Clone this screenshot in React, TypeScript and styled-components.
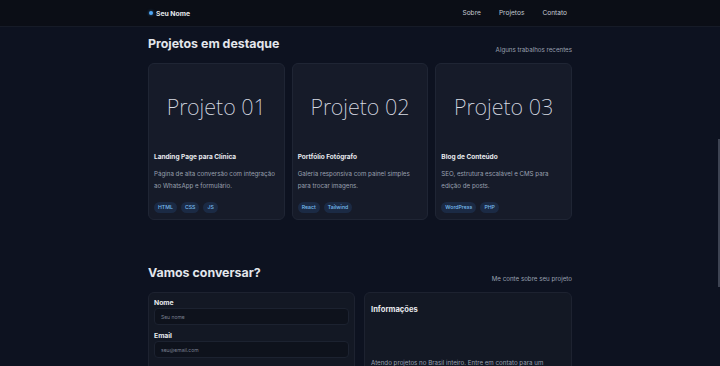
import React from "react";
import styled, { createGlobalStyle } from "styled-components";

const Global = createGlobalStyle`
  html, body { margin: 0; padding: 0; background: #0d1220; }
  body { font-family: Inter, "Noto Sans", sans-serif; color: #e5e7eb; overflow: hidden; }
  * { box-sizing: border-box; }
`;

const Page = styled.div`
  width: 720px;
  height: 366px;
  overflow: hidden;
  background: #0d1220;
  position: relative;
`;

const Header = styled.header`
  height: 27px;
  background: #0b0e16;
  border-bottom: 1px solid #161b27;
  display: flex;
  justify-content: center;
`;

const Container = styled.div`
  width: 424px;
  margin: 0 auto;
`;

const HeaderInner = styled(Container)`
  display: flex;
  align-items: center;
  justify-content: space-between;
  padding-right: 5px;
`;

const Brand = styled.div`
  display: flex;
  align-items: center;
  gap: 3px;
  font-size: 6.8px;
  font-weight: 700;
  color: #e5e7eb;
  padding-left: 1px;
`;

const Dot = styled.span`
  width: 4px;
  height: 4px;
  border-radius: 50%;
  background: #4ea6f5;
  box-shadow: 0 0 3px rgba(78, 166, 245, 0.6);
`;

const Nav = styled.nav`
  display: flex;
  gap: 18px;
  font-size: 6.6px;
  color: #c3c8d2;
`;

const Section = styled(Container)<{ $top: number }>`
  padding-top: ${(p) => p.$top}px;
`;

const HeadRow = styled.div`
  display: flex;
  justify-content: space-between;
  align-items: flex-end;
  margin-bottom: 10px;
`;

const Title = styled.h2`
  margin: 0;
  font-size: 12.4px;
  line-height: 18px;
  font-weight: 700;
  color: #e3e6ec;
`;

const Sub = styled.span`
  font-size: 6.2px;
  color: #9aa1b0;
  padding-bottom: 0;
`;

const Cards = styled.div`
  display: grid;
  grid-template-columns: repeat(3, 1fr);
  gap: 7px;
`;

const Card = styled.div`
  background: #161b29;
  border: 1px solid #1f2534;
  border-radius: 6px;
  height: 157px;
  display: flex;
  flex-direction: column;
`;

const Thumb = styled.div`
  height: 84px;
  display: flex;
  align-items: center;
  justify-content: center;
  font-family: "Noto Sans", sans-serif;
  font-weight: 200;
  font-size: 21.6px;
  color: #d8dce3;
`;

const Body = styled.div`
  padding: 3px 5px 0 5px;
  display: flex;
  flex-direction: column;
`;

const CardTitle = styled.div`
  font-size: 6.5px;
  font-weight: 700;
  color: #e8eaee;
  line-height: 12px;
`;

const Desc = styled.div`
  margin-top: 5px;
  font-size: 6.2px;
  line-height: 12px;
  color: #9aa1b0;
`;

const Tags = styled.div`
  display: flex;
  gap: 4px;
  margin-top: 10px;
`;

const Tag = styled.span`
  background: #1b2a44;
  color: #79bdf0;
  font-size: 5.2px;
  font-weight: 500;
  padding: 0 4px;
  height: 11px;
  line-height: 11px;
  border-radius: 6px;
`;

const Grid2 = styled.div`
  display: grid;
  grid-template-columns: 207px 208px;
  gap: 9px;
`;

const Panel = styled.div`
  background: #131824;
  border: 1px solid #1d2230;
  border-radius: 6px;
  height: 120px;
  padding: 5px 5px;
`;

const Label = styled.div`
  font-size: 6.8px;
  font-weight: 700;
  color: #e8eaee;
  line-height: 10px;
`;

const Input = styled.div`
  margin-bottom: 6px;
  height: 17px;
  background: #0e121c;
  border: 1px solid #1c2230;
  border-radius: 4px;
  font-size: 5px;
  color: #7a8090;
  display: flex;
  align-items: center;
  padding-left: 6px;
`;

const InfoTitle = styled.div`
  font-size: 7.6px;
  font-weight: 700;
  color: #e8eaee;
  margin-top: 7px;
  margin-left: 1px;
`;

const InfoText = styled.div`
  margin-top: 45px;
  font-size: 6.2px;
  color: #9aa1b0;
  margin-left: 1px;
`;

const Scroll = styled.div`
  position: absolute;
  right: 0;
  top: 139px;
  width: 2px;
  height: 148px;
  background: #3d4352;
`;

const projects = [
  {
    n: "01",
    title: "Landing Page para Clínica",
    desc: "Página de alta conversão com integração ao WhatsApp e formulário.",
    tags: ["HTML", "CSS", "JS"],
  },
  {
    n: "02",
    title: "Portfólio Fotógrafo",
    desc: "Galeria responsiva com painel simples para trocar imagens.",
    tags: ["React", "Tailwind"],
  },
  {
    n: "03",
    title: "Blog de Conteúdo",
    desc: "SEO, estrutura escalável e CMS para edição de posts.",
    tags: ["WordPress", "PHP"],
  },
];

export default function App() {
  return (
    <Page>
      <Global />
      <Header>
        <HeaderInner>
          <Brand>
            <Dot />
            Seu Nome
          </Brand>
          <Nav>
            <span>Sobre</span>
            <span>Projetos</span>
            <span>Contato</span>
          </Nav>
        </HeaderInner>
      </Header>
      <Section $top={8}>
        <HeadRow>
          <Title>Projetos em destaque</Title>
          <Sub>Alguns trabalhos recentes</Sub>
        </HeadRow>
        <Cards>
          {projects.map((p) => (
            <Card key={p.n}>
              <Thumb>Projeto {p.n}</Thumb>
              <Body>
                <CardTitle>{p.title}</CardTitle>
                <Desc>{p.desc}</Desc>
                <Tags>
                  {p.tags.map((t) => (
                    <Tag key={t}>{t}</Tag>
                  ))}
                </Tags>
              </Body>
            </Card>
          ))}
        </Cards>
      </Section>
      <Section $top={44}>
        <HeadRow>
          <Title>Vamos conversar?</Title>
          <Sub>Me conte sobre seu projeto</Sub>
        </HeadRow>
        <Grid2>
          <Panel>
            <Label>Nome</Label>
            <Input>Seu nome</Input>
            <Label>Email</Label>
            <Input>seu@email.com</Input>
          </Panel>
          <Panel>
            <InfoTitle>Informações</InfoTitle>
            <InfoText>Atendo projetos no Brasil inteiro. Entre em contato para um orçamento.</InfoText>
          </Panel>
        </Grid2>
      </Section>
      <Scroll />
    </Page>
  );
}
